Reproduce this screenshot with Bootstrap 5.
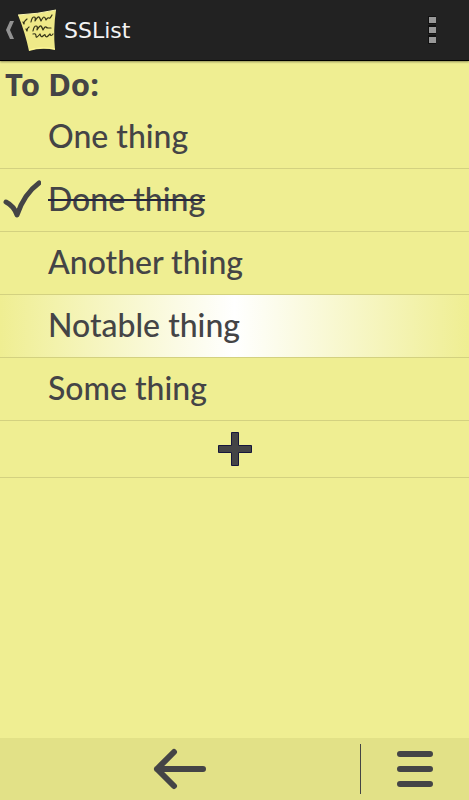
<!DOCTYPE html>
<html lang="en">
<head>
<meta charset="utf-8">
<meta name="viewport" content="width=device-width, initial-scale=1">
<title>SSList</title>
<link rel="stylesheet" href="https://cdn.jsdelivr.net/npm/bootstrap@5.3.0/dist/css/bootstrap.min.css">
<style>
  :root { --paper: #efee92; --rule: #d3d180; --ink: #444446; }
  body { background: var(--paper); color: var(--ink); font-family: Lato, "Liberation Sans", sans-serif; }
  svg { display: block; }
  .plain-btn { background: none; border: 0; padding: 0; color: inherit; }
  .app-bar { height: 61px; background: #222; border-bottom: 1px solid #000; box-shadow: 0 1px 2px rgba(0, 0, 0, .4); padding: 0 25px 0 4px; }
  .app-title { font: 22px/32px "DejaVu Sans", sans-serif; color: #f3f3f3; padding: 2px 0 0 6px; }
  .list-title { font: 700 31px/44px "Noto Sans", sans-serif; padding: 1px 5px; }
  .todo-row { height: 63px; border-bottom: 1px solid var(--rule); cursor: pointer; }
  .todo-row.first-row { height: 62px; }
  .tick-slot { width: 48px; padding-left: 3px; }
  .todo-row input:not(:checked) ~ .tick-slot svg { display: none; }
  .todo-text { font-size: 32px; font-weight: 500; line-height: 44px; padding-bottom: 3px; }
  .todo-row input:checked ~ .todo-text { text-decoration: line-through 2px #25253c; }
  .notable { background: linear-gradient(90deg, var(--paper), #fff 50%, var(--paper)); }
  .add-row { height: 57px; border-bottom: 1px solid var(--rule); }
  .tool-bar { height: 62px; background: #e2e187; }
  .menu-slot { width: 108px; }
  .divider { width: 1px; height: 50px; background: #444; }
</style>
<script src="https://cdn.jsdelivr.net/npm/bootstrap@5.3.0/dist/js/bootstrap.bundle.min.js"></script>
</head>
<body class="d-flex flex-column min-vh-100">
<header class="app-bar d-flex align-items-center justify-content-between">
  <button class="plain-btn d-flex align-items-center" type="button">
    <svg width="54" height="60" viewBox="4 0 54 60" aria-hidden="true">
      <path d="M14 21h-4L6 30l4 9h4l-4-9z" fill="#929292"/>
      <path d="M18 15Q38 14 56 10Q53 30 55 50Q42 47 29 51Q25 32 18 15z" fill="#efe988"/>
      <path d="M18 15Q38 14 56 10" fill="none" stroke="#faf6b2"/>
      <path d="M29 50Q42 46 55 49" fill="none" stroke="#fff797"/>
      <g fill="none" stroke="#343318" stroke-width="1.200" stroke-linecap="round" stroke-linejoin="round">
        <path d="M23 22l1 2q0-3 3-5M26 29l1 2q0-3 2-4"/>
        <path d="M31 22q1-5 3-5t1 4q3-5 4-4t2 4q2-4 3-4t2 3q2-3 3-2t3-3M33 31q1-5 3-5t1 4q3-5 4-4t2 4q2-4 3-3t2 1l3 0M33 34q3-1 3 2t4-2q1 4 3 2t2-1q1 3 3 1t2-2q1 3 3 0"/>
      </g>
    </svg>
    <span class="app-title">SSList</span>
  </button>
  <button class="plain-btn" type="button" aria-label="More options">
    <svg width="23" height="28" viewBox="0 0 23 28" aria-hidden="true">
      <path d="M7 0h8v8H7zM7 9h8v9H7zM7 19h8v9H7z" fill="#111"/>
      <path d="M8 1h7v6H8zM8 11h7v6H8zM8 21h7v6H8z" fill="#999"/>
    </svg>
  </button>
</header>
<main class="flex-grow-1">
  <h1 class="list-title mb-0">To Do:</h1>
  <ul class="list-unstyled mb-0">
    <li><label class="todo-row first-row d-flex align-items-center"><input class="visually-hidden" type="checkbox"><span class="tick-slot"><svg width="38" height="40" viewBox="0 0 38 40"><path d="M3 22Q11 26 14 35Q21 14 36 3" fill="none" stroke="#444446" stroke-width="5" stroke-linecap="round" stroke-linejoin="round"/></svg></span><span class="todo-text">One thing</span></label></li>
    <li><label class="todo-row d-flex align-items-center"><input class="visually-hidden" type="checkbox" checked><span class="tick-slot"><svg width="38" height="40" viewBox="0 0 38 40"><path d="M3 22Q11 26 14 35Q21 14 36 3" fill="none" stroke="#444446" stroke-width="5" stroke-linecap="round" stroke-linejoin="round"/></svg></span><span class="todo-text">Done thing</span></label></li>
    <li><label class="todo-row d-flex align-items-center"><input class="visually-hidden" type="checkbox"><span class="tick-slot"><svg width="38" height="40" viewBox="0 0 38 40"><path d="M3 22Q11 26 14 35Q21 14 36 3" fill="none" stroke="#444446" stroke-width="5" stroke-linecap="round" stroke-linejoin="round"/></svg></span><span class="todo-text">Another thing</span></label></li>
    <li><label class="todo-row notable d-flex align-items-center"><input class="visually-hidden" type="checkbox"><span class="tick-slot"><svg width="38" height="40" viewBox="0 0 38 40"><path d="M3 22Q11 26 14 35Q21 14 36 3" fill="none" stroke="#444446" stroke-width="5" stroke-linecap="round" stroke-linejoin="round"/></svg></span><span class="todo-text">Notable thing</span></label></li>
    <li><label class="todo-row d-flex align-items-center"><input class="visually-hidden" type="checkbox"><span class="tick-slot"><svg width="38" height="40" viewBox="0 0 38 40"><path d="M3 22Q11 26 14 35Q21 14 36 3" fill="none" stroke="#444446" stroke-width="5" stroke-linecap="round" stroke-linejoin="round"/></svg></span><span class="todo-text">Some thing</span></label></li>
  </ul>
  <button class="plain-btn add-row w-100 d-flex align-items-center justify-content-center" type="button" aria-label="Add item">
    <svg width="36" height="36" viewBox="0 0 36 36" aria-hidden="true"><path d="M14.500 1.500h7v13h13v7h-13v13h-7v-13h-13v-7h13z" fill="#444446" stroke="#16163c"/></svg>
  </button>
</main>
<footer class="tool-bar d-flex align-items-center">
  <button class="plain-btn flex-grow-1 h-100 d-flex align-items-center justify-content-center" type="button" aria-label="Back">
    <svg width="54" height="42" viewBox="0 0 54 42" aria-hidden="true"><path d="M50 21H4M21 4L4 21l17 17" fill="none" stroke="#444446" stroke-width="6" stroke-linecap="round" stroke-linejoin="round"/></svg>
  </button>
  <div class="divider"></div>
  <button class="plain-btn menu-slot h-100 d-flex align-items-center justify-content-center" type="button" aria-label="Menu">
    <svg width="38" height="38" viewBox="0 0 38 38" aria-hidden="true"><path d="M4 4h30M4 19h30M4 34h30" stroke="#444446" stroke-width="6" stroke-linecap="round"/></svg>
  </button>
</footer>
</body>
</html>
